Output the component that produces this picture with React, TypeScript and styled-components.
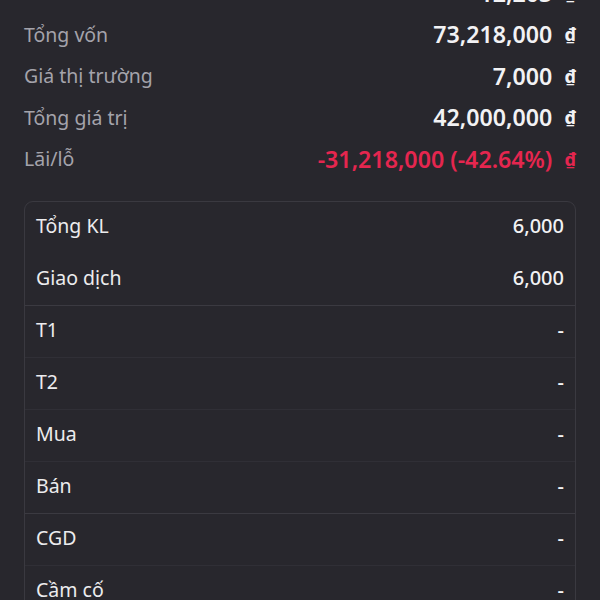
import styled, { createGlobalStyle } from "styled-components";

const GlobalStyle = createGlobalStyle`
  html, body {
    margin: 0;
    padding: 0;
    background: #28272d;
  }
  body {
    font-family: "Noto Sans", "Liberation Sans", sans-serif;
    color: #ececee;
    overflow: hidden;
  }
`;

const Page = styled.div`
  width: 600px;
  height: 600px;
  overflow: hidden;
  background: #28272d;
`;

const Inner = styled.div`
  margin-top: -28px;
  padding: 0 24px;
`;

const Summary = styled.div`
  display: flex;
  flex-direction: column;
`;

const SummaryRow = styled.div`
  display: flex;
  align-items: center;
  justify-content: space-between;
  height: 41.5px;
`;

const Label = styled.span`
  font-size: 19.5px;
  color: #a4a3ab;
`;

const Value = styled.span<{ $loss?: boolean }>`
  display: flex;
  align-items: center;
  gap: 12px;
  font-size: 23.2px;
  font-weight: 600;
  color: ${(p) => (p.$loss ? "#e5264f" : "#f2f2f4")};
`;

const Currency = styled.span`
  font-size: 18px;
  font-weight: 700;
`;

const Card = styled.div`
  margin-top: 21px;
  border: 1px solid #3a3940;
  border-radius: 9px;
  overflow: hidden;
`;

const CardRow = styled.div<{ $divider?: "none" | "soft" | "strong" }>`
  display: flex;
  align-items: center;
  justify-content: space-between;
  height: 52px;
  padding: 0 11px 3px;
  box-sizing: border-box;
  border-top: 1px solid
    ${(p) =>
      p.$divider === "strong"
        ? "#3b3a41"
        : p.$divider === "soft"
        ? "#302f36"
        : "transparent"};
  &:first-child {
    border-top: none;
    height: 51px;
  }
`;

const CardLabel = styled.span`
  font-size: 19.5px;
  color: #ececee;
`;

const CardValue = styled.span`
  font-size: 20px;
  font-weight: 500;
  color: #f2f2f4;
`;

const summary = [
  { label: "Giá vốn", value: "12,203" },
  { label: "Tổng vốn", value: "73,218,000" },
  { label: "Giá thị trường", value: "7,000" },
  { label: "Tổng giá trị", value: "42,000,000" },
  { label: "Lãi/lỗ", value: "-31,218,000 (-42.64%)", loss: true },
];

const details: { label: string; value: string; divider: "none" | "soft" | "strong" }[] = [
  { label: "Tổng KL", value: "6,000", divider: "none" },
  { label: "Giao dịch", value: "6,000", divider: "none" },
  { label: "T1", value: "-", divider: "strong" },
  { label: "T2", value: "-", divider: "soft" },
  { label: "Mua", value: "-", divider: "soft" },
  { label: "Bán", value: "-", divider: "soft" },
  { label: "CGD", value: "-", divider: "strong" },
  { label: "Cầm cố", value: "-", divider: "soft" },
  { label: "Phong tỏa", value: "-", divider: "soft" },
];

export default function App() {
  return (
    <Page>
      <GlobalStyle />
      <Inner>
        <Summary>
          {summary.map((s) => (
            <SummaryRow key={s.label}>
              <Label>{s.label}</Label>
              <Value $loss={s.loss}>
                {s.value}
                <Currency>₫</Currency>
              </Value>
            </SummaryRow>
          ))}
        </Summary>
        <Card>
          {details.map((d) => (
            <CardRow key={d.label} $divider={d.divider}>
              <CardLabel>{d.label}</CardLabel>
              <CardValue>{d.value}</CardValue>
            </CardRow>
          ))}
        </Card>
      </Inner>
    </Page>
  );
}
